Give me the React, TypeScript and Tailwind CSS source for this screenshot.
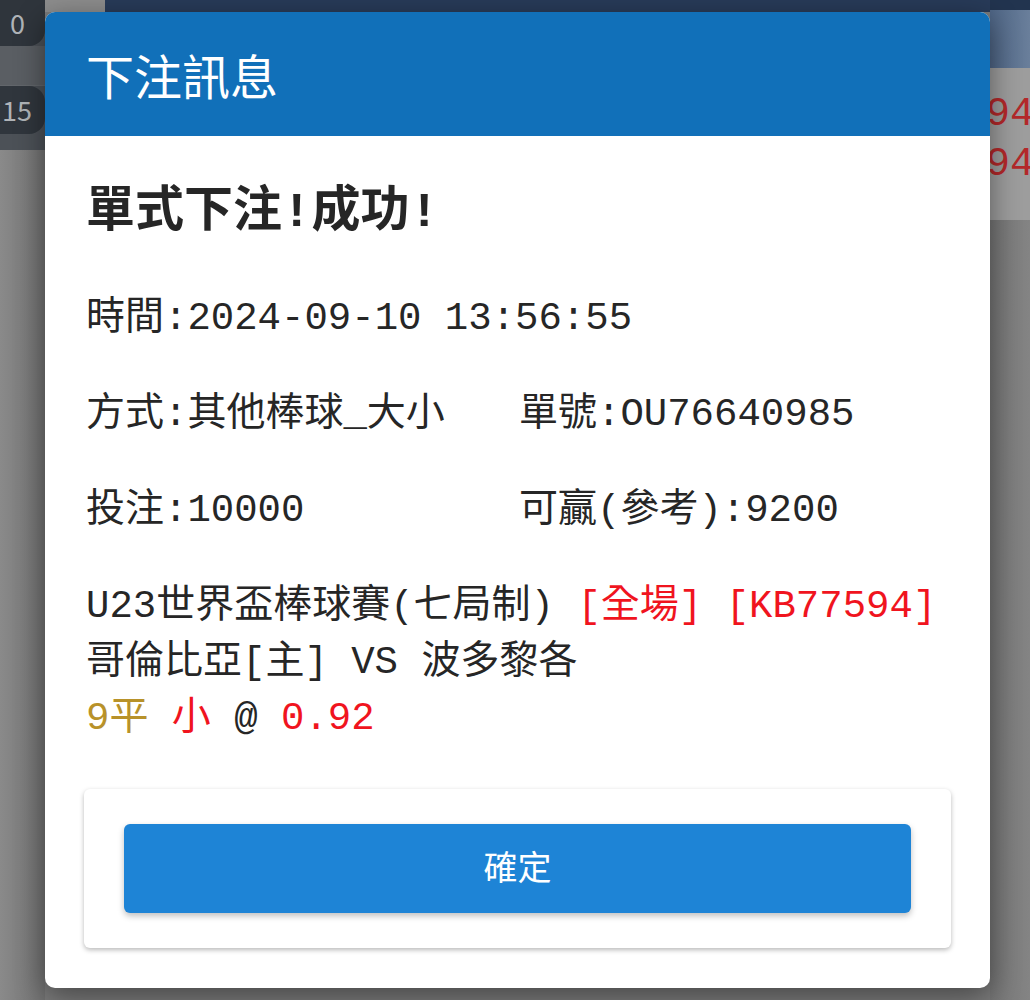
import React from 'react';

const mono = "font-['Liberation_Mono','Noto_Sans_CJK_TC',monospace]";
const cjk = "font-['Noto_Sans_CJK_TC','Noto_Sans',sans-serif]";

function Backdrop() {
  return (
    <div className="flex h-[1000px] w-full">
      <div className="flex w-[45px] flex-col">
        <div className="flex h-[150px] flex-col bg-[#4c5157]">
          <div className="flex h-[46px] items-center rounded-br-[16px] bg-[#2f353c] pl-[10px] text-[27px] text-[#b0b4b8]">
            <span className={cjk}>0</span>
          </div>
          <div className="h-[40px] border-b border-[#62666b] bg-[#5a5e63]" />
          <div className="flex h-[48px] items-center rounded-r-[16px] bg-[#30363d] pl-[2px] text-[27px] text-[#b0b4b8]">
            <span className={cjk}>15</span>
          </div>
        </div>
        <div className="flex-1 bg-gradient-to-r from-[#8a8a8a] to-[#727272]" />
      </div>
      <div className="flex flex-1 flex-col">
        <div className="flex h-[12px]">
          <div className="w-[60px] bg-[#8d8d8d]" />
          <div className="flex-1 bg-[#283b59]" />
        </div>
        <div className="flex-1 bg-[#7c7c7c]" />
      </div>
      <div className="flex w-[40px] flex-col overflow-hidden">
        <div className="h-[10px] bg-[#22344f]" />
        <div className="h-[58px] bg-gradient-to-r from-[#4f6686] to-[#6a7f9b]" />
        <div className="flex h-[152px] flex-col bg-[#9d9d9d] pt-[22px]">
          <div className="-ml-[4px] whitespace-nowrap font-['Liberation_Mono',monospace] text-[40px] leading-[50px] text-[#b3282a]">9460</div>
          <div className="-ml-[4px] whitespace-nowrap font-['Liberation_Mono',monospace] text-[40px] leading-[50px] text-[#b3282a]">9460</div>
        </div>
        <div className="flex-1 bg-gradient-to-r from-[#767676] to-[#848484]" />
      </div>
    </div>
  );
}

function BetDialog() {
  return (
    <div className="absolute left-[45px] top-[12px] flex h-[976px] w-[945px] flex-col overflow-hidden rounded-[10px] bg-white shadow-[0_8px_30px_rgba(0,0,0,0.45)]">
      <div className="flex h-[124px] items-center bg-[#1170b9] px-[41px]">
        <h2 className={`${cjk} text-[48px] font-normal text-white`}>下注訊息</h2>
      </div>

      <div className={`${mono} flex flex-1 flex-col px-[41px] pt-[48px] text-[39px] text-[#262626]`}>
        <div className="text-[49px] font-bold leading-[58px]">單式下注!成功!</div>

        <div className="mt-[49px] flex flex-col gap-[40px]">
          <div className="leading-[56px]">時間:2024-09-10 13:56:55</div>
          <div className="grid grid-cols-[433px_1fr] leading-[56px]">
            <span>方式:其他棒球_大小</span>
            <span>單號:OU76640985</span>
          </div>
          <div className="grid grid-cols-[433px_1fr] leading-[56px]">
            <span>投注:10000</span>
            <span>可贏(參考):9200</span>
          </div>
          <div className="flex flex-col whitespace-nowrap leading-[56px]">
            <div>
              U23世界盃棒球賽(七局制) <span className="text-[#f0141e]">[全場] [KB77594]</span>
            </div>
            <div>哥倫比亞[主] VS 波多黎各</div>
            <div>
              <span className="text-[#b8922a]">9平</span>{' '}
              <span className="text-[#f0141e]">小</span> @ <span className="text-[#f0141e]">0.92</span>
            </div>
          </div>
        </div>

        <div className="-mx-[2px] mt-[42px] rounded-[6px] bg-white px-[40px] py-[35px] shadow-[0_2px_5px_rgba(0,0,0,0.28)]">
          <button className={`${cjk} flex h-[89px] w-full items-center justify-center rounded-[6px] bg-[#1e84d6] pb-[6px] text-[34px] font-normal text-white shadow-[0_3px_6px_rgba(0,0,0,0.25)]`}>
            確定
          </button>
        </div>
      </div>
    </div>
  );
}

export default function App() {
  return (
    <div className="relative h-[1000px] w-[1030px] overflow-hidden">
      <Backdrop />
      <BetDialog />
    </div>
  );
}
